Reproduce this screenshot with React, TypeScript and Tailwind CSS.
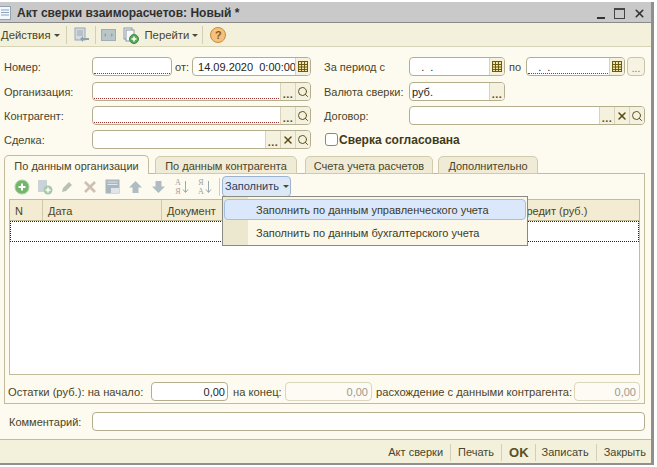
import { ReactNode } from "react";
import { Search, X } from "lucide-react";

const Arrow = () => <span className="inline-block w-0 h-0 border-x-[3px] border-x-transparent border-t-[3px] border-t-[#4a4a3a]" />;

const Sep = ({ className = "h-[18px]" }: { className?: string }) => <div className={`w-px bg-[#d3cfb4] shrink-0 ${className}`} />;

function Calendar() {
  return (
    <svg width="12" height="13" viewBox="0 0 12 13" fill="none" stroke="#6b5a10" strokeWidth="1">
      <rect x="1.5" y="1.5" width="9" height="10" fill="#f3e7a8" />
      <path d="M1.5 4.5h9M1.5 7h9M1.5 9.5h9M4.5 1.5v10M7.5 1.5v10" />
    </svg>
  );
}

type BtnKind = "dots" | "x" | "q" | "cal";

function FieldBtn({ kind }: { kind: BtnKind }) {
  return (
    <div className="w-[15px] h-full shrink-0 border-l border-[#d9d4b8] bg-[#f4f1de] flex items-center justify-center relative">
      {kind === "dots" && <span className="text-[11px] leading-none font-bold text-[#5a5020] tracking-[0.5px] mt-[6px]">...</span>}
      {kind === "x" && <X size={12} strokeWidth={3} className="text-[#5a4a10]" />}
      {kind === "q" && <Search size={12} strokeWidth={2} className="text-[#5a5020]" />}
      {kind === "cal" && <Calendar />}
    </div>
  );
}

function Field({ width, text, req, btns = [], align }: { width: string; text?: string; req?: boolean; btns?: BtnKind[]; align?: string }) {
  return (
    <div className={`${width} h-[19px] shrink-0 flex border border-[#b5ae8e] rounded-[4px] bg-white overflow-hidden`}>
      <div className={`flex-1 min-w-0 relative px-[2px] text-[11px] leading-[18px] whitespace-pre text-[#26241a] ${align ?? ""}`}>
        {text}
        {req && <div className="absolute left-[1px] right-[1px] bottom-[1px] border-b border-dotted border-[#a03030]" />}
      </div>
      {btns.map((b, i) => <FieldBtn key={i} kind={b} />)}
    </div>
  );
}

const Label = ({ width, children, className = "" }: { width: string; children: ReactNode; className?: string }) => (
  <div className={`${width} shrink-0 text-[11px] leading-[20px] text-[#4a4528] whitespace-nowrap ${className}`}>{children}</div>
);

function TopIcons() {
  return (
    <>
      <svg width="16" height="16" viewBox="0 0 16 16" className="ml-[7px]">
        <rect x="1" y="1" width="10" height="12" fill="#d4dae0" stroke="#9aa7b0" />
        <path d="M3 4h6M3 6h6M3 8h6" stroke="#9aa7b0" />
        <path d="M6 12l3-3v2h6v2H9v2z" fill="#8fa0ac" />
      </svg>
      <Sep className="ml-[5px] h-[18px]" />
      <svg width="15" height="14" viewBox="0 0 15 14" className="ml-[5px]">
        <rect x="0.5" y="1.5" width="14" height="11" fill="#b9c5c9" stroke="#a1adb1" />
        <path d="M3 7l2-2v4zM12 7l-2-2v4z" fill="#7fae86" />
      </svg>
      <svg width="16" height="17" viewBox="0 0 16 17" className="ml-[7px]">
        <rect x="1" y="1" width="8" height="11" fill="#eef1f4" stroke="#8d9aa6" />
        <rect x="3" y="3" width="8" height="11" fill="#f6f8fa" stroke="#8d9aa6" />
        <circle cx="11" cy="12" r="4.5" fill="#58a85a" stroke="#3f8a44" />
        <path d="M11 9.5v5M8.5 12h5" stroke="#fff" strokeWidth="1.5" />
      </svg>
    </>
  );
}

function TableIcons() {
  return (
    <>
      <svg width="16" height="16" viewBox="0 0 16 16" className="ml-[9px]">
        <circle cx="8" cy="8" r="7" fill="#74b56c" stroke="#a7cfa0" />
        <path d="M8 4.500v7M4.500 8h7" stroke="#fff" strokeWidth="2" />
      </svg>
      <svg width="16" height="16" viewBox="0 0 16 16" className="ml-[7px]">
        <rect x="1" y="1" width="9" height="12" fill="#c9d3d8" />
        <circle cx="11" cy="11" r="4.500" fill="#a9c8aa" />
        <path d="M11 8.500v5M8.500 11h5" stroke="#fff" strokeWidth="1.5" />
      </svg>
      <svg width="15" height="15" viewBox="0 0 15 15" className="ml-[7px]">
        <path d="M2 13l1-4 6-6 3 3-6 6z" fill="#b9c1b2" />
      </svg>
      <svg width="14" height="14" viewBox="0 0 14 14" className="ml-[8px]">
        <path d="M2 2l10 10M12 2L2 12" stroke="#cdbfb2" strokeWidth="2.6" />
      </svg>
      <svg width="15" height="15" viewBox="0 0 15 15" className="ml-[8px]">
        <rect x="0.5" y="0.5" width="14" height="14" fill="#a9b6bd" />
        <path d="M2.500 3h10M2.500 5.500h10" stroke="#dfe5e8" />
        <rect x="6" y="9" width="8" height="5" fill="#dfe5e8" />
      </svg>
      <svg width="15" height="14" viewBox="0 0 15 14" className="ml-[8px]">
        <path d="M7.500 1l6.500 6.500h-3.500V13h-6V7.500H1z" fill="#afbdc2" />
      </svg>
      <svg width="15" height="14" viewBox="0 0 15 14" className="ml-[8px]">
        <path d="M7.500 13L1 6.500h3.500V1h6v5.500H14z" fill="#afbdc2" />
      </svg>
      {[0, 1].map((i) => (
        <div key={i} className={`relative w-[16px] h-[18px] flex items-center ${i === 0 ? "ml-[8px]" : "ml-[7px]"}`}>
          <div className="text-[8px] leading-[9px] font-['Liberation_Serif',serif] text-[#9da3a6] w-[8px] text-center">
            <div>{i === 0 ? "А" : "Я"}</div>
            <div>{i === 0 ? "Я" : "А"}</div>
          </div>
          <svg width="7" height="14" viewBox="0 0 7 14">
            <path d="M3.500 1v11M1 9.500l2.500 3 2.500-3" stroke="#9aa8b0" fill="none" />
          </svg>
        </div>
      ))}
      <Sep className="ml-[6px] h-[18px]" />
    </>
  );
}

export default function App() {
  return (
    <div className="w-[657px] h-[467px] bg-white overflow-hidden font-['Liberation_Sans',Arial,sans-serif] pt-[2px]">
      <div className="w-[654px] h-[463px] border-r-[3px] border-b-[2px] border-[#8f8f8f] flex flex-col bg-[#fdfaef]">
        {/* title */}
        <div className="h-[21px] shrink-0 bg-[#c9c9c9] border-b border-[#8a8a8a] flex items-center pt-[2px]">
          <svg width="12" height="14" viewBox="0 0 12 14" className="-ml-[1px]">
            <rect x="0.500" y="0.500" width="11" height="13" fill="#f4f7fb" stroke="#8fa3b8" />
            <path d="M2 4h8M2 6.500h8M2 9h8" stroke="#8fa3b8" />
          </svg>
          <div className="ml-[6px] text-[12px] font-bold text-[#303030] whitespace-nowrap">Акт сверки взаиморасчетов: Новый *</div>
          <div className="ml-auto flex items-center mr-[5px]">
            <div className="w-[8px] h-[2px] bg-[#333] mt-[9px]" />
            <div className="ml-[9px] w-[11px] h-[11px] border border-[#444] border-t-2" />
            <X size={13} strokeWidth={3} className="ml-[8px] text-[#333]" />
          </div>
        </div>
        {/* toolbar */}
        <div className="h-[24px] shrink-0 bg-[#f3f1dc] border-b border-[#d6d2b6] flex items-center pt-[1px] text-[11.3px] text-[#4a4528]">
          <span className="ml-[1px]">Действия</span>
          <span className="ml-[3px] flex"><Arrow /></span>
          <Sep className="ml-[6px] h-[18px]" />
          <TopIcons />
          <span className="ml-[6px]">Перейти</span>
          <span className="ml-[3px] flex"><Arrow /></span>
          <Sep className="ml-[4px] h-[18px]" />
          <div className="ml-[7px] w-[16px] h-[16px] rounded-full bg-[#f4c27c] border border-[#c98a3a] text-[11px] leading-[14px] text-center text-[#8a5a20] font-bold">?</div>
        </div>
        {/* form */}
        <div className="flex-1 min-h-0 flex flex-col pt-[10px]">
          <div className="flex items-center h-[19px]">
            <Label width="w-[92px]" className="pl-[4px]">Номер:</Label>
            <Field width="w-[80px]" req />
            <Label width="w-[20px]" className="pl-[3px]">от:</Label>
            <Field width="w-[119px]" text=" 14.09.2020  0:00:00" btns={["cal"]} />
            <Label width="w-[98px]" className="pl-[13px]">За период с</Label>
            <Field width="w-[96px]" text="   .  ." btns={["cal"]} />
            <Label width="w-[21px]" className="pl-[4px]">по</Label>
            <Field width="w-[99px]" text="   .  ." req btns={["cal"]} />
            <div className="ml-[2px] w-[18px] h-[19px] border border-[#c9c4a6] rounded-[4px] bg-[#f6f3e2] text-[10px] text-center leading-[21px] text-[#77724f]">...</div>
          </div>
          <div className="flex items-center h-[19px] mt-[6px]">
            <Label width="w-[92px]" className="pl-[4px]">Организация:</Label>
            <Field width="w-[219px]" req btns={["dots", "q"]} />
            <Label width="w-[98px]" className="pl-[13px]">Валюта сверки:</Label>
            <Field width="w-[96px]" text="руб." btns={["dots"]} />
          </div>
          <div className="flex items-center h-[19px] mt-[5px]">
            <Label width="w-[92px]" className="pl-[4px]">Контрагент:</Label>
            <Field width="w-[219px]" req btns={["dots", "q"]} />
            <Label width="w-[98px]" className="pl-[13px]">Договор:</Label>
            <Field width="w-[236px]" btns={["dots", "x", "q"]} />
          </div>
          <div className="flex items-center h-[19px] mt-[5px]">
            <Label width="w-[92px]" className="pl-[4px]">Сделка:</Label>
            <Field width="w-[219px]" btns={["dots", "x", "q"]} />
            <div className="ml-[14px] w-[13px] h-[13px] border border-[#8f8a6c] rounded-[3px] bg-white" />
            <div className="ml-[1px] text-[12px] leading-[20px] font-bold text-[#3f3a1c] whitespace-nowrap">Сверка согласована</div>
          </div>
          {/* tabs */}
          <div className="flex items-end h-[19px] mt-[6px] ml-[4px] relative z-10 text-[11px] text-[#4a4528]">
            <div className="w-[145px] h-[19px] bg-[#fdfaef] border border-b-0 border-[#c2bc9a] rounded-t-[5px] text-center leading-[20px]">По данным организации</div>
            <div className="ml-[6px] w-[142px] h-[18px] bg-[#efebd6] border border-[#d0cbab] rounded-t-[5px] text-center leading-[18px]">По данным контрагента</div>
            <div className="ml-[8px] w-[128px] h-[18px] bg-[#efebd6] border border-[#d0cbab] rounded-t-[5px] text-center leading-[18px]">Счета учета расчетов</div>
            <div className="ml-[5px] w-[100px] h-[18px] bg-[#efebd6] border border-[#d0cbab] rounded-t-[5px] text-center leading-[18px]">Дополнительно</div>
          </div>
          <div className="ml-[4px] w-[641px] h-[231px] -mt-px border border-[#c2bc9a] flex flex-col relative shrink-0">
            <div className="h-[21px] mt-[2px] flex items-center shrink-0">
              <TableIcons />
              <div className="ml-[2px] w-[69px] h-[21px] bg-[#dde8f7] border border-[#9db3d4] rounded-[4px] flex items-center pl-[2px] text-[11px] text-[#2c3e60]">
                Заполнить
                <span className="ml-[4px] flex"><Arrow /></span>
              </div>
            </div>
            <div className="ml-[4px] mt-[2px] w-[631px] h-[176px] shrink-0 border border-[#c2bc9a] bg-white flex flex-col">
              <div className="h-[21px] shrink-0 flex bg-[#f3ecd2] border-b border-[#c2bc9a] text-[11px] text-[#4a4528] leading-[22px]">
                <div className="w-[33px] pl-[5px] border-r border-[#cfc9a8]">N</div>
                <div className="w-[119px] pl-[5px] border-r border-[#cfc9a8]">Дата</div>
                <div className="flex-1 pl-[5px] whitespace-nowrap">Документ</div>
                <div className="w-[120px] pl-[1px] whitespace-nowrap">Кредит (руб.)</div>
              </div>
              <div className="h-[21px] shrink-0 border border-dotted border-[#222]" />
            </div>
            <div className="flex items-center h-[19px] mt-[7px] text-[11.2px] leading-[20px] text-[#4a4528]">
              <div className="ml-[3px] w-[143px] whitespace-nowrap">Остатки (руб.): на начало:</div>
              <Field width="w-[77px]" text="0,00" align="text-right" />
              <div className="ml-[5px] w-[52px] whitespace-nowrap">на конец:</div>
              <div className="w-[87px] h-[19px] border border-[#dbd6bc] rounded-[4px] bg-[#fdfbf3] text-right pr-[3px] text-[11px] leading-[18px] text-[#9a9a90]">0,00</div>
              <div className="ml-[4px] w-[198px] whitespace-nowrap">расхождение с данными контрагента:</div>
              <div className="w-[66px] h-[19px] border border-[#dbd6bc] rounded-[4px] bg-[#fdfbf3] text-right pr-[3px] text-[11px] leading-[18px] text-[#9a9a90]">0,00</div>
            </div>
            {/* dropdown */}
            <div className="absolute left-[217px] top-[22px] w-[306px] h-[50px] bg-[#fbf8ea] border border-[#8a8a84] z-20 flex">
              <div className="w-[25px] bg-[#ece8cf] shrink-0" />
              <div className="absolute left-[1px] top-[2px] right-[1px] h-[21px] rounded-[4px] border border-[#a5bfe4] bg-[#dbe8fb] text-[11px] leading-[20px] pl-[31px] text-[#3c3a28]">Заполнить по данным управленческого учета</div>
              <div className="mt-[25px] ml-[8px] text-[11px] leading-[22px] text-[#3c3a28] whitespace-nowrap">Заполнить по данным бухгалтерского учета</div>
            </div>
          </div>
          <div className="flex items-center h-[19px] mt-[8px]">
            <Label width="w-[92px]" className="pl-[9px]">Комментарий:</Label>
            <Field width="w-[553px]" />
          </div>
        </div>
        {/* footer */}
        <div className="h-[24px] shrink-0 bg-[#f3f1dc] border-t border-[#c2bc9a] flex items-center justify-end pr-[5px] pt-[2px] text-[11px] text-[#4a4528]">
          <span>Акт сверки</span>
          <Sep className="mx-[7px] h-[17px]" />
          <span>Печать</span>
          <Sep className="mx-[7px] h-[17px]" />
          <span className="text-[13px] font-bold text-[#5a5020]">OK</span>
          <Sep className="mx-[6px] h-[17px]" />
          <span>Записать</span>
          <Sep className="mx-[7px] h-[17px]" />
          <span>Закрыть</span>
        </div>
      </div>
    </div>
  );
}
